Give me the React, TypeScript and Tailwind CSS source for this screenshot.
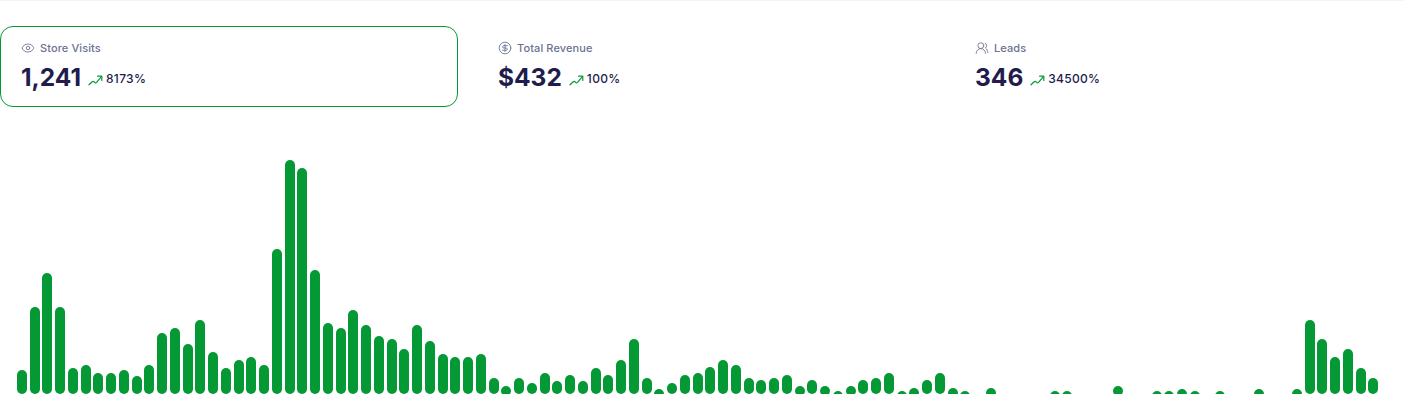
import { CircleDollarSign, Eye, UsersRound } from "lucide-react";
import type { LucideIcon } from "lucide-react";

interface Stat {
  label: string;
  value: string;
  change: string;
  icon: LucideIcon;
  active?: boolean;
}

const stats: Stat[] = [
  { label: "Store Visits", value: "1,241", change: "8173%", icon: Eye, active: true },
  { label: "Total Revenue", value: "$432", change: "100%", icon: CircleDollarSign },
  { label: "Leads", value: "346", change: "34500%", icon: UsersRound },
];

const bars = [
  23, 86, 120, 86, 25, 28, 20, 20, 23, 17, 28, 60, 65, 49, 73, 41, 25, 33, 36, 28,
  144, 233, 225, 123, 70, 65, 83, 68, 57, 54, 44, 68, 52, 39, 36, 36, 39, 15, 7, 15,
  10, 20, 12, 18, 12, 25, 18, 33, 54, 15, 4, 10, 18, 20, 26, 33, 28, 15, 13, 15,
  18, 7, 13, 7, 2, 7, 13, 15, 20, 2, 5, 13, 20, 5, 2, 0, 5, 0, 0, 0,
  0, 2, 2, 0, 0, 0, 7, 0, 0, 2, 2, 4, 2, 0, 2, 0, 0, 4, 0, 0,
  4, 73, 54, 36, 44, 25, 15,
];

function TrendIcon() {
  return (
    <svg
      viewBox="0 0 15 11"
      fill="none"
      stroke="#059936"
      strokeWidth="1.2"
      strokeLinecap="round"
      strokeLinejoin="round"
      className="ml-[7px] mt-[6px] h-[11px] w-[15px]"
    >
      <path d="M1 9.8 4.2 6.8C5 6.1 5.6 6.3 6.2 7 7 8 7.8 8.2 8.6 7.4L13.4 1.6" />
      <path d="M9.6 1.2h4.2v4.2" />
    </svg>
  );
}

function StatCard({ stat }: { stat: Stat }) {
  const Icon = stat.icon;
  return (
    <div
      className={`h-[81px] rounded-[13px] border pl-[20px] pt-[14px] ${
        stat.active ? "border-[#059936]" : "border-transparent"
      }`}
    >
      <div className="flex items-center gap-[5px] text-[11px] font-medium leading-[14px] tracking-[0.1px] text-[#6b7291]">
        <Icon className="h-[14px] w-[14px]" strokeWidth={1.5} />
        <span>{stat.label}</span>
      </div>
      <div className="mt-[5px] flex items-center">
        <span className="text-[24.5px] font-bold leading-[34px] text-[#211c4d]">{stat.value}</span>
        <TrendIcon />
        <span className="ml-[3px] mt-[3px] text-[12px] font-medium tracking-[0.3px] text-[#211c4d]">
          {stat.change}
        </span>
      </div>
    </div>
  );
}

export default function App() {
  return (
    <div className="h-[401px] w-[1404px] overflow-hidden border-t border-[#f3f4f6] bg-white font-['Inter',sans-serif] antialiased">
      <div className="mt-[25px] grid grid-cols-[458px_458px_1fr] gap-[19px]">
        {stats.map((stat) => (
          <StatCard key={stat.label} stat={stat} />
        ))}
      </div>
      {/* Chart */}
      <div className="ml-[15.6px] mt-[52px] flex h-[235px] w-[1363.8px] items-end">
        {bars.map((h, i) => (
          <div key={i} className="flex flex-1 justify-center">
            <div className="w-[10px] overflow-hidden" style={{ height: h ? h + 1 : 0 }}>
              <div className="h-full min-h-[10px] rounded-[5px] bg-[#059936]" />
            </div>
          </div>
        ))}
      </div>
    </div>
  );
}
